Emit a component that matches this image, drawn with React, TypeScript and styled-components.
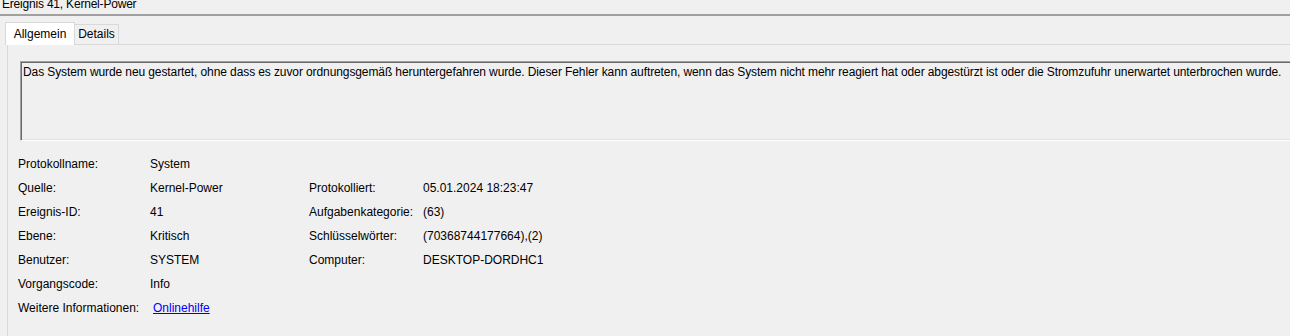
import { Fragment } from "react";
import styled, { createGlobalStyle } from "styled-components";

const GlobalStyle = createGlobalStyle`
  body {
    margin: 0;
    background: #f0f0f0;
    font-family: "Liberation Sans", Arial, sans-serif;
    font-size: 12px;
    color: #000;
    overflow: hidden;
  }
`;

type Row = { label: string; value: string; label2?: string; value2?: string; link?: boolean };

const rows: Row[] = [
  { label: "Protokollname:", value: "System" },
  { label: "Quelle:", value: "Kernel-Power", label2: "Protokolliert:", value2: "05.01.2024 18:23:47" },
  { label: "Ereignis-ID:", value: "41", label2: "Aufgabenkategorie:", value2: "(63)" },
  { label: "Ebene:", value: "Kritisch", label2: "Schlüsselwörter:", value2: "(70368744177664),(2)" },
  { label: "Benutzer:", value: "SYSTEM", label2: "Computer:", value2: "DESKTOP-DORDHC1" },
  { label: "Vorgangscode:", value: "Info" },
  { label: "Weitere Informationen:", value: "Onlinehilfe", link: true },
];

const description =
  "Das System wurde neu gestartet, ohne dass es zuvor ordnungsgemäß heruntergefahren wurde. Dieser Fehler kann auftreten, wenn das System nicht mehr reagiert hat oder abgestürzt ist oder die Stromzufuhr unerwartet unterbrochen wurde.";

export default function App() {
  return (
    <>
      <GlobalStyle />
      <Window>
        <TitleBar>
          <Title>Ereignis 41, Kernel-Power</Title>
        </TitleBar>
        <TabStrip>
          <Tab $active>Allgemein</Tab>
          <Tab>Details</Tab>
        </TabStrip>
        <Panel>
          <DescriptionBox>{description}</DescriptionBox>
          <InfoGrid>
            {rows.map((r) => (
              <Fragment key={r.label}>
                <Label>{r.label}</Label>
                <Value>{r.link ? <Link href="#">{r.value}</Link> : r.value}</Value>
                <Label>{r.label2 ?? ""}</Label>
                <Value>{r.value2 ?? ""}</Value>
              </Fragment>
            ))}
          </InfoGrid>
        </Panel>
      </Window>
    </>
  );
}

// window is wider than the viewport, the right edge is cut off like in the dialog
const Window = styled.div`
  width: 1320px;
  height: 336px;
  display: flex;
  flex-direction: column;
`;

const TitleBar = styled.div`
  height: 14px;
  overflow: hidden;
  border-bottom: 2px solid #a0a0a0;
  padding-left: 2px;
`;

const Title = styled.div`
  line-height: 14px;
  margin-top: -3px;
  letter-spacing: -0.2px;
`;

const TabStrip = styled.div`
  display: flex;
  align-items: flex-end;
  margin-top: 6px;
  padding-left: 5px;
  height: 22px;
`;

const Tab = styled.div<{ $active?: boolean }>`
  box-sizing: border-box;
  border: 1px solid #d9d9d9;
  border-bottom: none;
  border-left: ${(p) => (p.$active ? "1px solid #d9d9d9" : "none")};
  background: ${(p) => (p.$active ? "#ffffff" : "#f0f0f0")};
  width: ${(p) => (p.$active ? "70px" : "44px")};
  height: ${(p) => (p.$active ? "23px" : "20px")};
  margin-bottom: ${(p) => (p.$active ? "-1px" : "0")};
  padding-top: ${(p) => (p.$active ? "3px" : "1px")};
  line-height: 16px;
  text-align: center;
  position: relative;
  z-index: ${(p) => (p.$active ? 1 : 0)};
`;

const Panel = styled.div`
  flex: 1;
  margin-left: 7px;
  border-top: 1px solid #d9d9d9;
  border-left: 1px solid #d9d9d9;
  padding: 16px 0 0 10px;
`;

const DescriptionBox = styled.div`
  box-sizing: border-box;
  margin-left: 2px;
  height: 80px;
  border: 1px solid;
  border-color: #a0a0a0 #ffffff #ffffff #a0a0a0;
  box-shadow: inset 1px 1px 0 #696969, inset -1px -1px 0 #e3e3e3;
  padding: 2px 3px 0 2px;
  line-height: 16px;
  letter-spacing: -0.1px;
  white-space: nowrap;
`;

const InfoGrid = styled.div`
  display: grid;
  grid-template-columns: 132px 159px 114px auto;
  grid-auto-rows: 24px;
  line-height: 24px;
  margin-top: 11px;
`;

const Label = styled.div`
  white-space: nowrap;
`;

const Value = styled.div`
  white-space: nowrap;
`;

const Link = styled.a`
  color: #0000ff;
  text-decoration: underline;
  padding-left: 3px;
`;
